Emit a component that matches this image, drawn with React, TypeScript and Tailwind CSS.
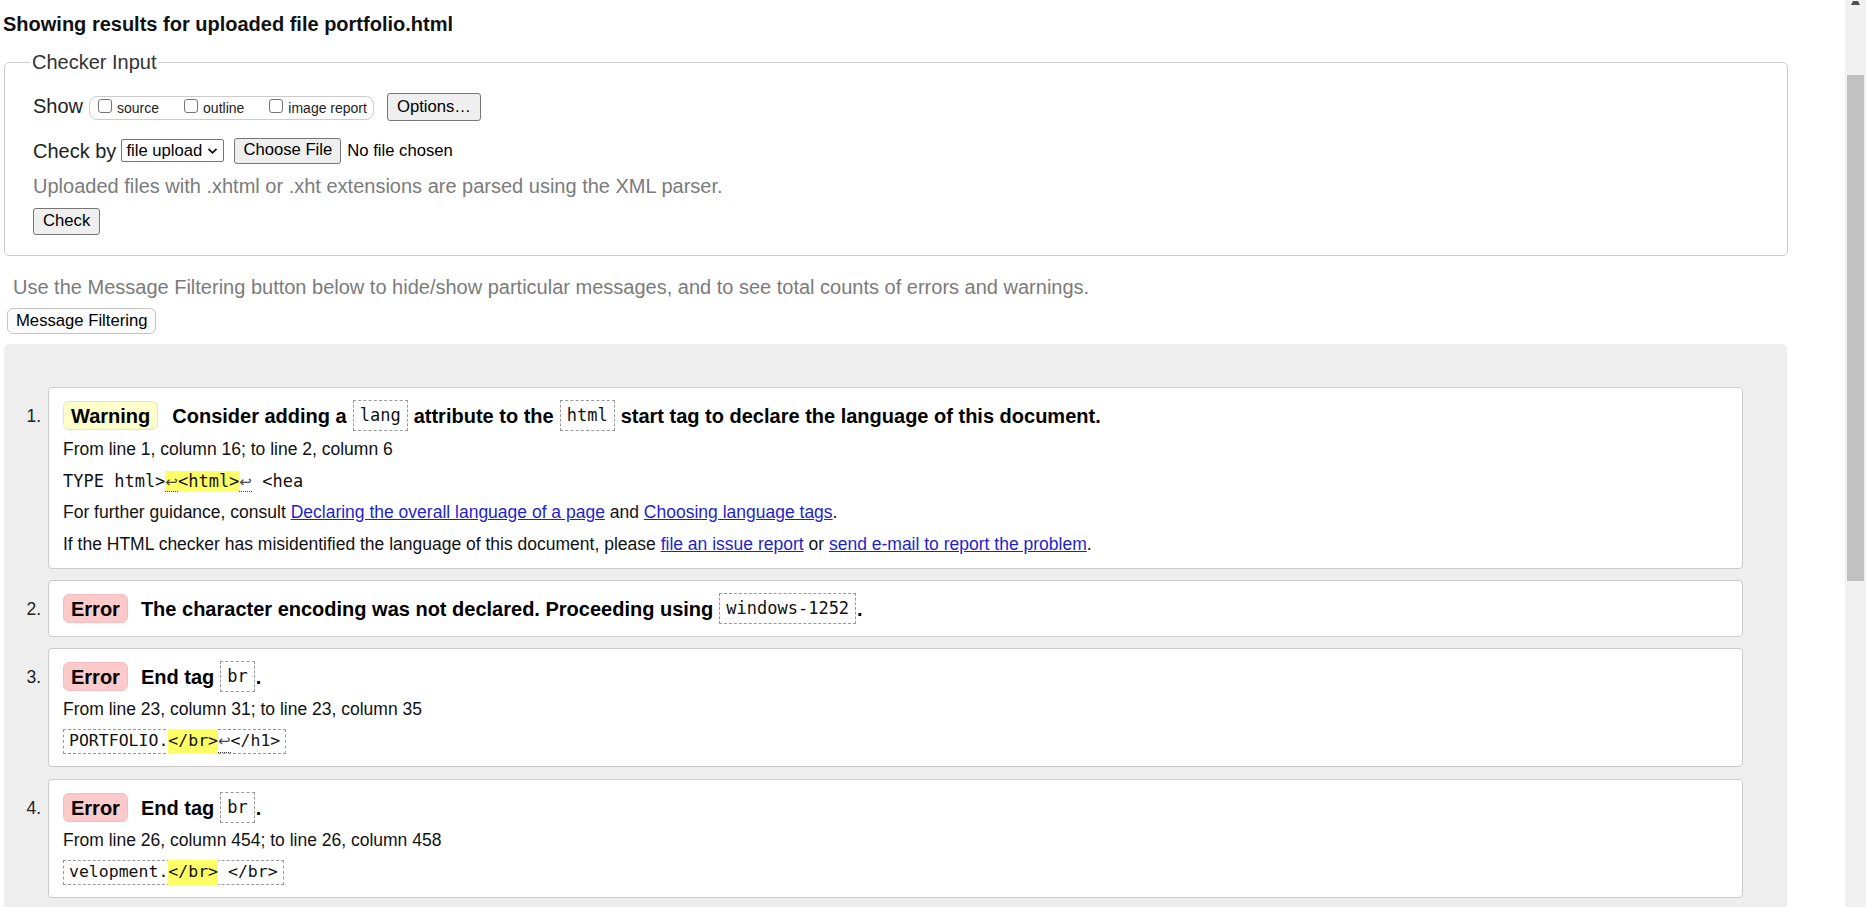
import React from "react";

function CodeBox({ children }: { children: React.ReactNode }) {
  return (
    <span className="inline-flex items-center h-[31px] px-[6px] border border-dashed border-[#9a9a9a] font-['DejaVu_Sans_Mono',monospace] text-[17px] font-normal text-[#111] whitespace-pre">
      {children}
    </span>
  );
}

function Badge({ kind }: { kind: "Warning" | "Error" }) {
  const cls =
    kind === "Warning"
      ? "bg-[#ffffcc] border-[#e6e6b4]"
      : "bg-[#fccaca] border-[#f5bdbd]";
  return (
    <span
      className={`inline-flex items-center h-[29px] px-[7px] rounded-[6px] border ${cls} text-[20px] font-bold text-black`}
    >
      {kind}
    </span>
  );
}

function Ret() {
  return (
    <span className="border-b border-dotted border-[#444] text-[#444] font-['DejaVu_Sans',sans-serif] text-[15px]">
      ↩
    </span>
  );
}

function Hl({ children }: { children: React.ReactNode }) {
  return <span className="bg-[#ffff66]">{children}</span>;
}

function Card({
  n,
  mb,
  children,
}: {
  n: number;
  mb: string;
  children: React.ReactNode;
}) {
  return (
    <li className={`flex ${mb}`}>
      <div className="w-[44px] shrink-0 pr-[7px] pt-[17px] text-right text-[17.5px] leading-[24px] text-[#222]">
        {n}.
      </div>
      <div className="w-[1695px] bg-white border border-[#cbcbcb] rounded-[4px] pl-[14px] pt-[12px]">
        {children}
      </div>
    </li>
  );
}

export default function App() {
  const btn =
    "inline-flex items-center bg-[#efefef] border border-[#767676] rounded-[3px] text-[16.67px] text-black leading-none";
  const cb =
    "inline-block w-[14px] h-[14px] mb-[5px] border border-[#767676] rounded-[3px] bg-white";
  return (
    <div className="w-[1866px] h-[907px] flex overflow-hidden bg-white font-['Liberation_Sans',Arial,sans-serif] text-black">
      <div className="flex-1 flex flex-col min-w-0">
        <div className="h-[50px] pt-[12px] pl-[3px] text-[20px] leading-[24px] font-bold text-[#111]">
          Showing results for uploaded file portfolio.html
        </div>

        <fieldset className="ml-[4px] w-[1784px] border border-[#cccccc] rounded-[5px] pl-[28px] pb-[20px]">
          <legend className="-ml-[3px] px-[2px] text-[20px] leading-[24px] text-[#333]">
            Checker Input
          </legend>

          <div className="mt-[18px] h-[28px] flex items-center">
            <span className="text-[20px] text-[#222]">Show</span>
            <div className="ml-[6px] h-[24px] mt-[4px] flex items-center border border-[#cccccc] rounded-[8px] pl-[8px] pr-[6px] text-[14px] text-[#222]">
              <span className={cb}></span>
              <span className="ml-[5px]">source</span>
              <span className={`${cb} ml-[25px]`}></span>
              <span className="ml-[5px]">outline</span>
              <span className={`${cb} ml-[25px]`}></span>
              <span className="ml-[5px]">image report</span>
            </div>
            <button className={`${btn} ml-[13px] h-[28px] mt-[2px] px-[9px]`}>Options…</button>
          </div>

          <div className="mt-[17px] h-[27px] flex items-center">
            <span className="text-[20px] text-[#222]">Check by</span>
            <div className="ml-[5px] h-[23px] w-[103px] flex items-center justify-between border border-[#767676] rounded-[2px] pl-[4px] pr-[5px] text-[16.67px] text-black bg-white">
              <span>file upload</span>
              <svg width="11" height="8" viewBox="0 0 11 8">
                <path d="M1.5 1.8 L5.5 5.8 L9.5 1.8" fill="none" stroke="#111" strokeWidth="1.8" />
              </svg>
            </div>
            <button className={`${btn} ml-[10px] h-[26px] px-[8px]`}>Choose File</button>
            <span className="ml-[6px] text-[16.67px] text-black">No file chosen</span>
          </div>

          <div className="mt-[10px] text-[20px] leading-[24px] text-[#7b7b7b]">
            Uploaded files with .xhtml or .xht extensions are parsed using the XML parser.
          </div>

          <div className="mt-[10px]">
            <button className={`${btn} h-[27px] px-[9px]`}>Check</button>
          </div>
        </fieldset>

        <div className="mt-[19px] pl-[13px] text-[20px] leading-[24px] text-[#7b7b7b]">
          Use the Message Filtering button below to hide/show particular messages, and to see total counts of errors and warnings.
        </div>

        <div className="mt-[9px] pl-[7px]">
          <button className="inline-flex items-center h-[26px] px-[8px] bg-[#fbfbfb] border border-[#c4c4c4] rounded-[6px] text-[16.67px] text-black leading-none">
            Message Filtering
          </button>
        </div>

        <div className="mt-[10px] ml-[4px] w-[1783px] flex-1 min-h-0 bg-[#eeeeee] rounded-t-[5px] pt-[43px] overflow-hidden">
          <ol>
            <Card n={1} mb="mb-[11px]">
              <div className="flex items-center h-[31px]">
                <Badge kind="Warning" />
                <div className="ml-[14px] flex items-center gap-[6px] text-[20px] font-bold text-black">
                  <span>Consider adding a</span>
                  <CodeBox>lang</CodeBox>
                  <span>attribute to the</span>
                  <CodeBox>html</CodeBox>
                  <span>start tag to declare the language of this document.</span>
                </div>
              </div>
              <div className="mt-[6px] text-[17.5px] leading-[24px] text-[#111]">
                From line 1, column 16; to line 2, column 6
              </div>
              <div className="mt-[8px] h-[24px] text-[17px] leading-[24px] font-['DejaVu_Sans_Mono',monospace] text-[#111] whitespace-pre">
                {"TYPE html>"}
                <Hl>
                  <Ret />
                  {"<html>"}
                </Hl>
                <Ret />
                {" <hea"}
              </div>
              <div className="mt-[7px] text-[17.5px] leading-[24px] text-[#111]">
                For further guidance, consult{" "}
                <a className="text-[#1f1fcc] underline" href="#">
                  Declaring the overall language of a page
                </a>{" "}
                and{" "}
                <a className="text-[#1f1fcc] underline" href="#">
                  Choosing language tags
                </a>
                .
              </div>
              <div className="mt-[8px] mb-[12px] text-[17.5px] leading-[24px] text-[#111]">
                If the HTML checker has misidentified the language of this document, please{" "}
                <a className="text-[#1f1fcc] underline" href="#">
                  file an issue report
                </a>{" "}
                or{" "}
                <a className="text-[#1f1fcc] underline" href="#">
                  send e-mail to report the problem
                </a>
                .
              </div>
            </Card>

            <Card n={2} mb="mb-[11px]">
              <div className="flex items-center h-[31px] mb-[12px]">
                <Badge kind="Error" />
                <div className="ml-[13px] flex items-center gap-[6px] text-[20px] font-bold text-black">
                  <span>The character encoding was not declared. Proceeding using</span>
                  <CodeBox>windows-1252</CodeBox>
                  <span className="-ml-[5px]">.</span>
                </div>
              </div>
            </Card>

            <Card n={3} mb="mb-[12px]">
              <div className="flex items-center h-[31px]">
                <Badge kind="Error" />
                <div className="ml-[13px] flex items-center gap-[6px] text-[20px] font-bold text-black">
                  <span>End tag</span>
                  <CodeBox>br</CodeBox>
                  <span className="-ml-[5px]">.</span>
                </div>
              </div>
              <div className="mt-[5px] text-[17.5px] leading-[24px] text-[#111]">
                From line 23, column 31; to line 23, column 35
              </div>
              <div className="mt-[8px] mb-[12px] h-[25px]">
                <span className="inline-flex items-center h-[25px] px-[5px] border border-dashed border-[#9a9a9a] font-['DejaVu_Sans_Mono',monospace] text-[16.5px] text-[#111] whitespace-pre">
                  {"PORTFOLIO."}
                  <Hl>{"</br>"}</Hl>
                  <Ret />
                  {"</h1>"}
                </span>
              </div>
            </Card>

            <Card n={4} mb="mb-[11px]">
              <div className="flex items-center h-[31px]">
                <Badge kind="Error" />
                <div className="ml-[13px] flex items-center gap-[6px] text-[20px] font-bold text-black">
                  <span>End tag</span>
                  <CodeBox>br</CodeBox>
                  <span className="-ml-[5px]">.</span>
                </div>
              </div>
              <div className="mt-[5px] text-[17.5px] leading-[24px] text-[#111]">
                From line 26, column 454; to line 26, column 458
              </div>
              <div className="mt-[8px] mb-[12px] h-[25px]">
                <span className="inline-flex items-center h-[25px] px-[5px] border border-dashed border-[#9a9a9a] font-['DejaVu_Sans_Mono',monospace] text-[16.5px] text-[#111] whitespace-pre">
                  {"velopment."}
                  <Hl>{"</br>"}</Hl>
                  {" </br>"}
                </span>
              </div>
            </Card>
          </ol>
        </div>
      </div>

      <div className="w-[21px] shrink-0 bg-[#f1f1f1] flex flex-col">
        <svg width="21" height="5" viewBox="0 0 21 5" className="shrink-0">
          <path d="M6 5 L15 5 L13 1 L8 1 Z" fill="#505050" />
        </svg>
        <div className="mt-[70px] ml-[2px] w-[17px] h-[506px] bg-[#c1c1c1]"></div>
      </div>
    </div>
  );
}
